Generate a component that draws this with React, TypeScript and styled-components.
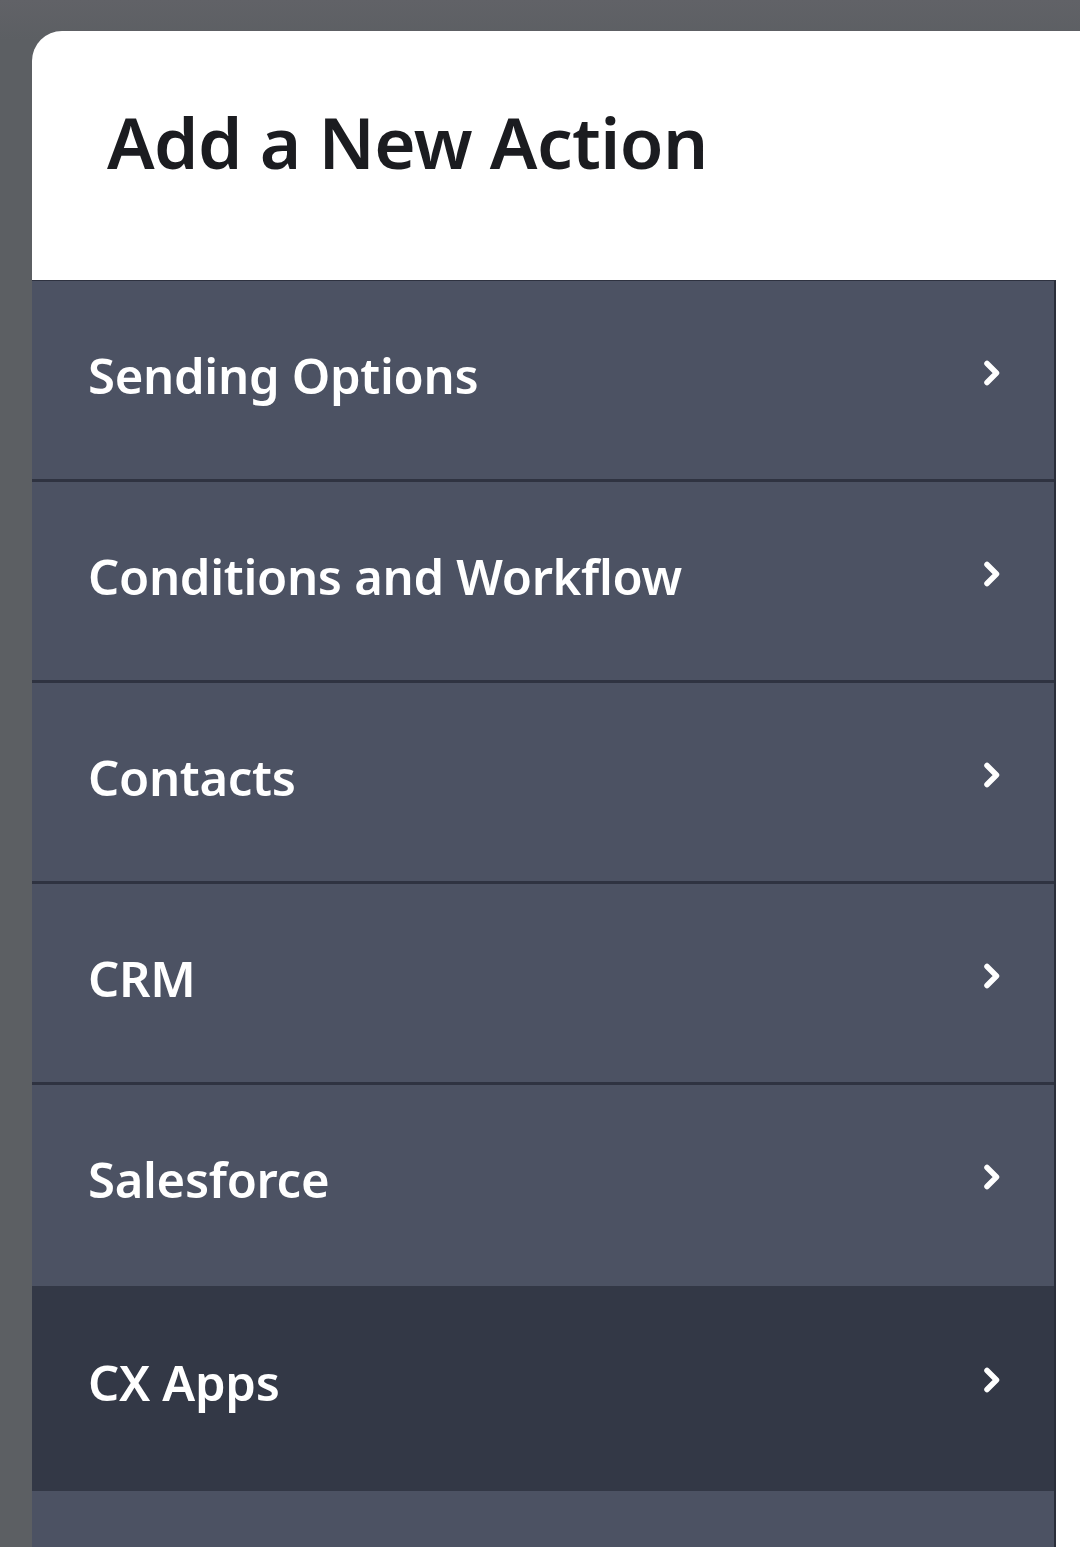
import React from 'react';
import styled, { createGlobalStyle } from 'styled-components';

type Category = {
  label: string;
  selected?: boolean;
};

const categories: Category[] = [
  { label: 'Sending Options' },
  { label: 'Conditions and Workflow' },
  { label: 'Contacts' },
  { label: 'CRM' },
  { label: 'Salesforce' },
  { label: 'CX Apps', selected: true },
  { label: '' },
];

const GlobalStyle = createGlobalStyle`
  html, body {
    margin: 0;
    padding: 0;
    background: #5e6065;
  }

  body {
    font-family: "Noto Sans", "Open Sans", sans-serif;
    -webkit-font-smoothing: antialiased;
  }
`;

const Backdrop = styled.div`
  height: 1547px;
  padding: 31px 0 0 32px;
  box-sizing: border-box;
  overflow: hidden;
  background: linear-gradient(180deg, #616267 0px, #5c5f63 40px);
`;

const Panel = styled.div`
  height: 100%;
  background: #fff;
  border-top-left-radius: 30px;
  overflow: hidden;
`;

const Header = styled.header`
  height: 249px;
  box-sizing: border-box;
  padding: 75px 0 0 75px;
`;

const Title = styled.h1`
  margin: 0;
  font-size: 71px;
  line-height: 1;
  font-weight: 600;
  color: #1b1c20;
  letter-spacing: -0.6px;
`;

const List = styled.ul`
  list-style: none;
  margin: 0;
  padding: 0;
  width: 1024px;
  border-top: 1px solid #2e3240;
  border-right: 2px solid #2a2e3a;
  box-sizing: border-box;
`;

const Row = styled.li<{ $selected?: boolean; $beforeSelected?: boolean }>`
  display: flex;
  align-items: center;
  justify-content: space-between;
  height: ${(p) => (p.$selected ? '205px' : '201px')};
  box-sizing: border-box;
  padding: 0 53px 10px 56px;
  background: ${(p) => (p.$selected ? '#333846' : '#4c5263')};
  border-bottom: 3px solid
    ${(p) => (p.$selected ? '#333846' : p.$beforeSelected ? '#4c5263' : '#2f3341')};
  color: #fff;
  font-size: 49px;
  font-weight: 600;
  letter-spacing: -0.3px;
  cursor: pointer;
`;

const Chevron = styled.svg`
  width: 18px;
  height: 26px;
  flex: none;
  margin-top: -4px;
`;

const ChevronIcon = () => (
  <Chevron viewBox="0 0 18 26" fill="none">
    <path
      d="M4 3.5 L13.5 13 L4 22.5"
      stroke="#fff"
      strokeWidth="5.5"
      strokeLinecap="round"
      strokeLinejoin="round"
    />
  </Chevron>
);

const App: React.FC = () => {
  return (
    <>
      <GlobalStyle />
      <Backdrop>
        <Panel>
          <Header>
            <Title>Add a New Action</Title>
          </Header>
          <List>
            {categories.map((c, i) => (
              <Row
                key={i}
                $selected={c.selected}
                $beforeSelected={!!categories[i + 1]?.selected}
              >
                <span>{c.label}</span>
                {c.label && <ChevronIcon />}
              </Row>
            ))}
          </List>
        </Panel>
      </Backdrop>
    </>
  );
};

export default App;
